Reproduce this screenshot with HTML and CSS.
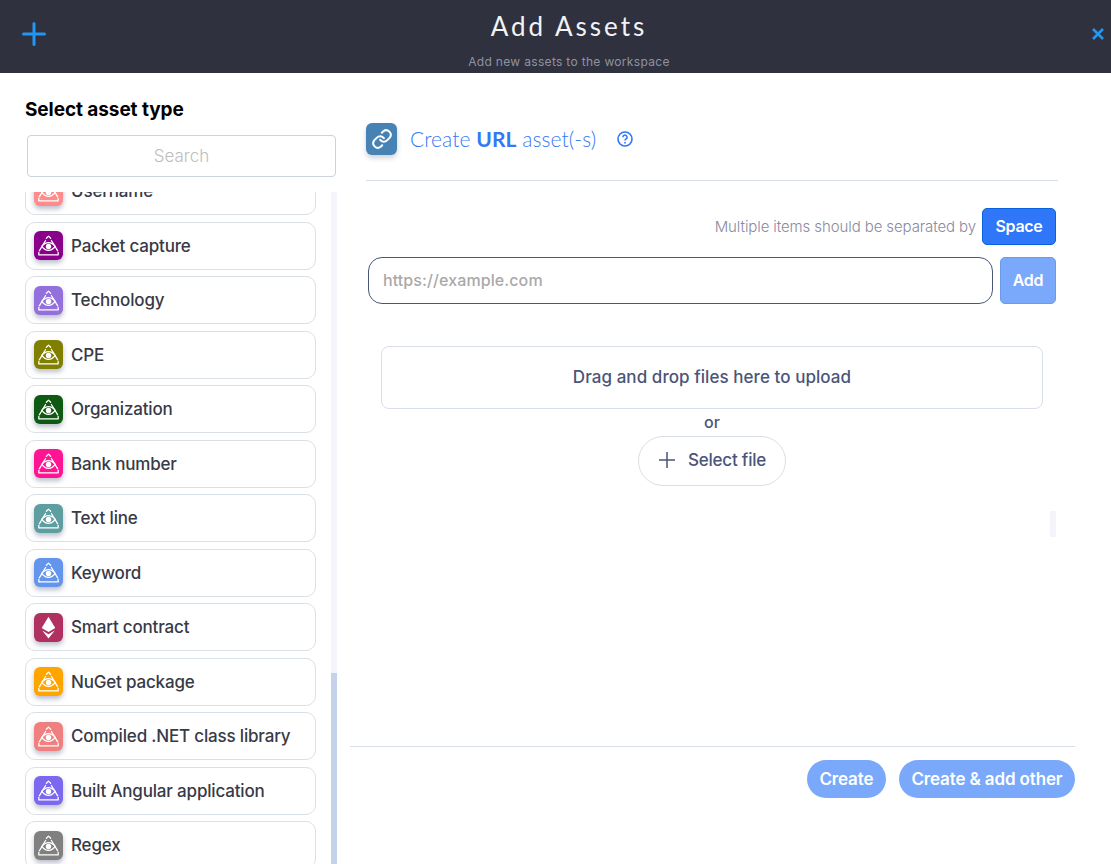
FILE: index.html
```html
<!DOCTYPE html>
<html lang="en">
<head>
<meta charset="utf-8">
<title>Add Assets</title>
<link rel="stylesheet" href="styles.css">
</head>
<body>
<svg class="defs" width="0" height="0" aria-hidden="true">
  <symbol id="eye" viewBox="0 0 30 30">
    <g fill="none" stroke="#fff" stroke-width="1.300" stroke-linecap="round" stroke-linejoin="round">
      <path d="M12.800 7.500 15 5.300 17.200 7.500"/>
      <path d="M8 16c2-2.700 4.300-4.100 7-4.100s5 1.400 7 4.100c-2 2.700-4.300 4.100-7 4.100s-5-1.400-7-4.100z"/>
      <path d="M12 9.800 5.500 20.500M18 9.800l6.500 10.700"/>
      <path d="M5 22v2.700h20V22"/>
    </g>
    <circle cx="15" cy="16" r="2.800" fill="#fff"/>
  </symbol>
</svg>
<header class="top">
  <svg class="top-plus" viewBox="0 0 24 24"><path d="M12 1.500v21M1.500 12h21" fill="none" stroke="#2196f3" stroke-width="3" stroke-linecap="round"/></svg>
  <div class="top-text">
    <h1 class="top-title">Add Assets</h1>
    <p class="top-sub">Add new assets to the workspace</p>
  </div>
  <svg class="top-close" viewBox="0 0 12 12"><path d="M1 1l10 10M11 1 1 11" fill="none" stroke="#2196f3" stroke-width="2.600"/></svg>
</header>
<main class="page">
  <aside class="side">
    <h2 class="side-title">Select asset type</h2>
    <input class="search" type="text" placeholder="Search">
    <div class="scroller">
      <ul class="types">
        <li class="type"><svg class="tile c-user"><use href="#eye"/></svg><span>Username</span></li>
        <li class="type"><svg class="tile c-packet"><use href="#eye"/></svg><span>Packet capture</span></li>
        <li class="type"><svg class="tile c-tech"><use href="#eye"/></svg><span>Technology</span></li>
        <li class="type"><svg class="tile c-cpe"><use href="#eye"/></svg><span>CPE</span></li>
        <li class="type"><svg class="tile c-org"><use href="#eye"/></svg><span>Organization</span></li>
        <li class="type"><svg class="tile c-bank"><use href="#eye"/></svg><span>Bank number</span></li>
        <li class="type"><svg class="tile c-text"><use href="#eye"/></svg><span>Text line</span></li>
        <li class="type"><svg class="tile c-key"><use href="#eye"/></svg><span>Keyword</span></li>
        <li class="type"><svg class="tile c-smart" viewBox="0 0 30 30"><path d="M15 4 8 15.500l7 4.200 7-4.200z" fill="#fff"/><path d="M8.500 18.200 15 26.500l6.500-8.300-6.500 3.800z" fill="#fff"/></svg><span>Smart contract</span></li>
        <li class="type"><svg class="tile c-nuget"><use href="#eye"/></svg><span>NuGet package</span></li>
        <li class="type"><svg class="tile c-net"><use href="#eye"/></svg><span>Compiled .NET class library</span></li>
        <li class="type"><svg class="tile c-ng"><use href="#eye"/></svg><span>Built Angular application</span></li>
        <li class="type"><svg class="tile c-regex"><use href="#eye"/></svg><span>Regex</span></li>
      </ul>
      <div class="track"><div class="thumb"></div></div>
    </div>
  </aside>
  <section class="panel">
    <div class="panel-main">
      <div class="head">
        <span class="head-icon">
          <svg viewBox="0 0 24 24" width="22" height="22" fill="none" stroke="#fff" stroke-width="2.200" stroke-linecap="round" stroke-linejoin="round"><path d="M10 13a5 5 0 0 0 7.500.500l3-3a5 5 0 0 0-7-7l-1.700 1.700"/><path d="M14 11a5 5 0 0 0-7.500-.500l-3 3a5 5 0 0 0 7 7l1.700-1.700"/></svg>
        </span>
        <h2 class="head-title">Create <b>URL</b> asset(-s)</h2>
        <svg class="help" viewBox="0 0 16 16" width="16" height="16"><circle cx="8" cy="8" r="7" fill="none" stroke="#2f76f5" stroke-width="1.600"/><path d="M5.900 6.200a2.100 2.100 0 1 1 3.300 1.700c-.8.500-1.200.9-1.200 1.700" fill="none" stroke="#2f76f5" stroke-width="1.500"/><circle cx="8" cy="11.700" r=".9" fill="#2f76f5"/></svg>
      </div>
      <div class="hint-row">
        <span class="hint">Multiple items should be separated by</span>
        <button class="space" type="button">Space</button>
      </div>
      <div class="add-row">
        <input class="url" type="text" placeholder="https://example.com">
        <button class="add" type="button">Add</button>
      </div>
      <div class="drop">Drag and drop files here to upload</div>
      <div class="or">or</div>
      <button class="select" type="button">
        <svg viewBox="0 0 18 18" width="18" height="18"><path d="M9 1v16M1 9h16" fill="none" stroke="#4a5578" stroke-width="1.500"/></svg>
        Select file
      </button>
      <div class="mark-row"><span class="mark"></span></div>
    </div>
    <footer class="foot">
      <button class="pill" type="button">Create</button>
      <button class="pill" type="button">Create &amp; add other</button>
    </footer>
  </section>
</main>
</body>
</html>
```
FILE: styles.css
```css
* { box-sizing: border-box; }
html, body { margin: 0; height: 864px; overflow: hidden; background: #fff; }
body { font-family: "Inter", "Open Sans", sans-serif; color: #30323e; }
.defs { position: absolute; }
h1, h2, p, ul { margin: 0; padding: 0; }
button, input { font-family: inherit; }

.top { height: 73px; background: #2f313e; display: flex; align-items: flex-start; }
.top-plus { width: 24px; height: 24px; margin: 22px 0 0 22px; flex: none; }
.top-text { flex: 1; text-align: center; }
.top-title { font-family: "Lato", sans-serif; font-size: 26px; line-height: 30px; margin-top: 11px; font-weight: 400; letter-spacing: 3px; color: #f2f3f6; }
.top-sub { font-size: 12px; line-height: 16px; margin-top: 13px; color: #8f93a0; letter-spacing: 0.320px; }
.top-close { width: 12px; height: 12px; margin: 28px 7px 0 0; flex: none; }

.page { display: grid; grid-template-columns: 350px 725px; height: 791px; }

.side { display: flex; flex-direction: column; min-height: 0; }
.side-title { font-size: 19px; line-height: 24px; font-weight: 700; color: #000; margin: 25px 0 0 25px; letter-spacing: -0.080px; }
.search { width: 309px; height: 42px; margin: 13px 0 0 27px; border: 1px solid #cdd3dc; border-radius: 4px; text-align: center; font-size: 17px; font-weight: 300; outline: none; flex: none; }
.search::placeholder { color: #bdbdbd; opacity: 1; }
.scroller { margin-top: 15px; flex: 1; min-height: 0; overflow: hidden; display: flex; }
.types { list-style: none; width: 331px; padding-left: 25px; margin-top: -25px; display: grid; grid-auto-rows: 48px; row-gap: 6.500px; flex: none; align-content: start; }
.type { width: 291px; height: 48px; display: flex; align-items: center; gap: 8px; padding-left: 8px; border: 1px solid #d9e0e6; border-radius: 10px; background: #fff; font-size: 17px; font-weight: 500; letter-spacing: -0.180px; color: #383a46; }
.tile { width: 29px; height: 29px; border-radius: 6px; flex: none; box-shadow: 0 3px 5px rgba(60, 70, 110, .35); }
.c-user { background: #ff8c8c; }
.c-packet { background: #8b008b; }
.c-tech { background: #9370db; }
.c-cpe { background: #808000; }
.c-org { background: #0f5a12; }
.c-bank { background: #ff1493; }
.c-text { background: #5f9ea0; }
.c-key { background: #6495ed; }
.c-smart { background: #b03060; }
.c-nuget { background: #ffa500; }
.c-net { background: #f08080; }
.c-ng { background: #7b68ee; }
.c-regex { background: #808080; }
.track { width: 6px; height: 100%; background: #f3f5fb; display: flex; flex-direction: column; justify-content: flex-end; flex: none; }
.thumb { height: 191px; background: #c5d3ea; }

.panel { display: flex; flex-direction: column; min-height: 0; }
.panel-main { height: 673px; padding: 50px 0 0 16px; }
.head { width: 692px; height: 58px; border-bottom: 1px solid #d9dfe6; display: flex; align-items: flex-start; }
.head-icon { width: 31px; height: 32px; border-radius: 6px; background: #4682b4; display: flex; align-items: center; justify-content: center; box-shadow: 0 3px 5px rgba(60, 70, 110, .25); }
.head-title { font-family: "Lato", sans-serif; font-size: 21px; font-weight: 300; line-height: 31px; color: #3478f6; margin-left: 13px; letter-spacing: 0.080px; }
.head-title b { font-weight: 700; }
.help { margin: 8px 0 0 21px; }
.hint-row { width: 690px; display: flex; justify-content: flex-end; align-items: center; gap: 6px; margin-top: 27px; }
.hint { font-size: 15px; font-weight: 300; color: #8a8aa0; letter-spacing: -0.100px; padding-bottom: 1px; }
.space { width: 74px; height: 37px; background: #2f76f8; border: 1px solid #0a62dc; border-radius: 5px; color: #fff; font-size: 16px; font-weight: 600; letter-spacing: -0.300px; padding: 0 0 1px; }
.add-row { display: flex; gap: 7px; margin: 12px 0 0 2px; width: 688px; }
.url { width: 625px; height: 47px; border: 1px solid #4a5578; border-radius: 14px; padding: 0 14px 1px; font-size: 16px; outline: none; letter-spacing: 0.100px; }
.url::placeholder { color: #a9a9a9; font-weight: 500; opacity: 1; }
.add { width: 56px; height: 47px; background: #7aa9fb; border: 1px solid #6a9ae8; border-radius: 5px; color: #fff; font-size: 16px; font-weight: 600; letter-spacing: -0.300px; padding: 0 0 2px; }
.drop { width: 662px; height: 63px; margin: 42px 0 0 15px; padding-bottom: 2px; border: 1px solid #d9dfe6; border-radius: 8px; display: flex; align-items: center; justify-content: center; font-size: 17px; font-weight: 500; letter-spacing: 0.060px; color: #4a5578; }
.or { width: 692px; text-align: center; font-size: 16px; font-weight: 500; line-height: 20px; margin-top: 3px; color: #4a5578; }
.select { display: flex; align-items: center; justify-content: center; gap: 12px; width: 148px; height: 50px; margin: 4px 0 0 272px; background: #fff; border: 1px solid #d9dfe6; border-radius: 25px; font-size: 17px; font-weight: 500; letter-spacing: -0.200px; color: #4a5578; padding: 0 0 2px; }
.mark-row { width: 690px; display: flex; justify-content: flex-end; margin-top: 25px; }
.mark { width: 6px; height: 26px; background: #f3f5fb; }
.foot { border-top: 1px solid #d9dfe6; display: flex; justify-content: flex-end; gap: 13px; padding-top: 13px; }
.pill { height: 38px; padding: 0 12.500px 1px; border: 0; border-radius: 19px; background: #7aa9fb; color: #fff; font-size: 17px; font-weight: 600; letter-spacing: -0.130px; }
```
